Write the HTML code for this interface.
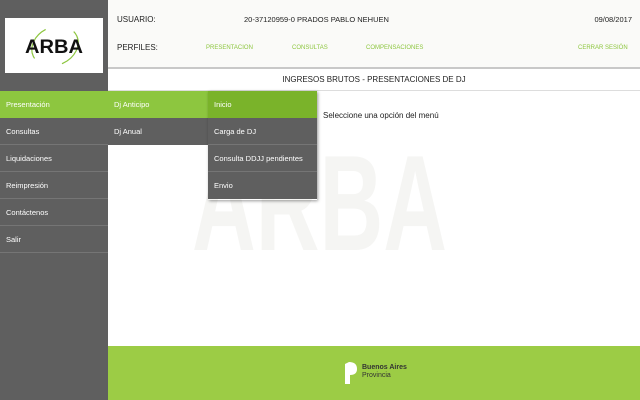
<!DOCTYPE html>
<html><head><meta charset="utf-8"><style>
*{margin:0;padding:0;box-sizing:border-box}
body{width:640px;height:400px;overflow:hidden;background:#fff;font-family:"Liberation Sans",sans-serif;position:relative;font-size:8px;color:#222}
.a{position:absolute}
.left{left:0;top:0;width:108px;height:400px;background:#5f5f5f}
.logo{left:5px;top:18px;width:98px;height:55px;background:#fff}
.hdr{left:108px;top:0;width:532px;height:69px;background:#fafaf8;border-bottom:2px solid #c8c8c8}
.title{left:108px;top:69px;width:532px;height:22px;background:#fff;border-bottom:1px solid #ddd;text-align:center;line-height:22px;font-size:8px}
.row{position:absolute;height:27px;line-height:27px;padding-left:6px;color:#fff;font-size:7.5px;border-bottom:1px solid #757575;background:#5f5f5f}
.g{background:#8dc63f;border-bottom:none}
.dg{background:#7ab32a;border-bottom:none}
.foot{left:108px;top:346px;width:532px;height:54px;background:#9ccc45}
.pl{color:#8dc63f;font-size:6px}
</style></head><body>
<div class="a left"></div>
<div class="a logo">
<svg width="98" height="55" viewBox="0 0 98 55"><ellipse cx="50" cy="28" rx="24" ry="19" fill="none" stroke="#8dc63f" stroke-width="1.2" transform="rotate(-25 50 28)" stroke-dasharray="35 30"/>
<text x="49" y="35" text-anchor="middle" font-family="Liberation Sans" font-weight="bold" font-size="19" fill="#111" textLength="58" lengthAdjust="spacingAndGlyphs">ARBA</text></svg>
</div>
<div class="a hdr">
<div class="a" style="left:9px;top:15px;font-size:8px">USUARIO:</div>
<div class="a" style="left:136px;top:15px;font-size:7.5px">20-37120959-0 PRADOS PABLO NEHUEN</div>
<div class="a" style="right:8px;top:15px;font-size:7.5px">09/08/2017</div>
<div class="a" style="left:9px;top:43px;font-size:8px">PERFILES:</div>
<div class="a pl" style="left:98px;top:45px">PRESENTACION</div>
<div class="a pl" style="left:184px;top:45px">CONSULTAS</div>
<div class="a pl" style="left:258px;top:45px">COMPENSACIONES</div>
<div class="a pl" style="left:470px;top:45px">CERRAR SESIÓN</div>
</div>
<div class="a title">INGRESOS BRUTOS - PRESENTACIONES DE DJ</div>
<svg class="a" style="left:0;top:0" width="640" height="400"><text x="192" y="250" font-family="Liberation Sans" font-weight="bold" font-size="136" fill="#f5f5f3" textLength="255" lengthAdjust="spacingAndGlyphs">ARBA</text></svg>
<div class="a" style="left:323px;top:111px;font-size:8px">Seleccione una opción del menú</div>
<div class="row g" style="left:0;top:91px;width:108px">Presentación</div>
<div class="row" style="left:0;top:118px;width:108px">Consultas</div>
<div class="row" style="left:0;top:145px;width:108px">Liquidaciones</div>
<div class="row" style="left:0;top:172px;width:108px">Reimpresión</div>
<div class="row" style="left:0;top:199px;width:108px">Contáctenos</div>
<div class="row" style="left:0;top:226px;width:108px">Salir</div>
<div class="row g" style="left:108px;top:91px;width:100px">Dj Anticipo</div>
<div class="row" style="left:108px;top:118px;width:100px;border-bottom:none">Dj Anual</div>
<div class="a" style="left:208px;top:91px;width:109px;height:109px;box-shadow:1px 1px 3px rgba(0,0,0,.4)">
<div class="row dg" style="left:0;top:0;width:109px">Inicio</div>
<div class="row" style="left:0;top:27px;width:109px">Carga de DJ</div>
<div class="row" style="left:0;top:54px;width:109px">Consulta DDJJ pendientes</div>
<div class="row" style="left:0;top:81px;width:109px;border-bottom:none">Envio</div>
</div>
<div class="a foot">
<svg class="a" style="left:236px;top:15px" width="14" height="24" viewBox="0 0 14 24"><path d="M1 3 L5 1 Q13 1 13 8 Q13 14 6 14 L6 23 L1 23 Z" fill="#fff"/></svg>
<div class="a" style="left:254px;top:18px;font-size:7px;font-weight:bold;color:#333">Buenos Aires</div>
<div class="a" style="left:254px;top:26px;font-size:7px;color:#333">Provincia</div>
</div>
</body></html>
